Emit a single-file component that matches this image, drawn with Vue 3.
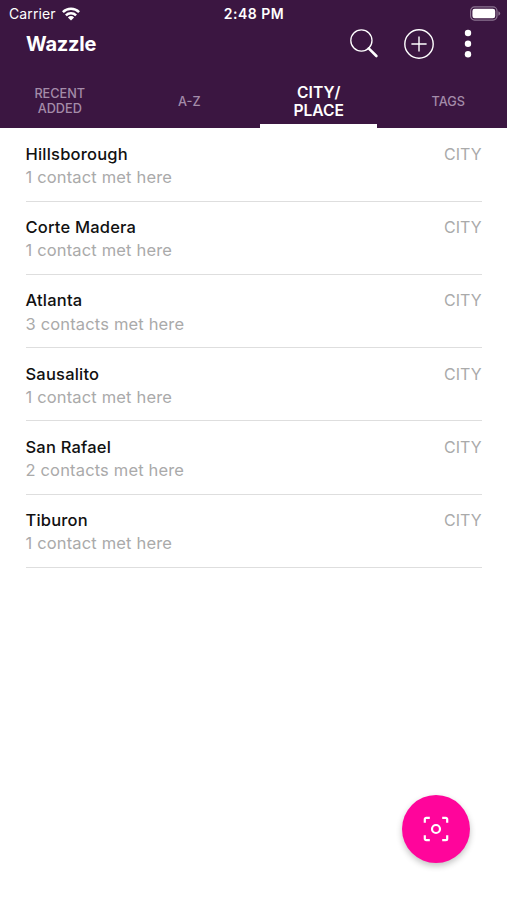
<script setup>
import { ref } from 'vue'

const tabs = [
  { id: 'recent', lines: ['RECENT', 'ADDED'] },
  { id: 'az', lines: ['A-Z'] },
  { id: 'city', lines: ['CITY/', 'PLACE'] },
  { id: 'tags', lines: ['TAGS'] },
]
const active = ref('city')

const places = [
  { name: 'Hillsborough', count: 1 },
  { name: 'Corte Madera', count: 1 },
  { name: 'Atlanta', count: 3 },
  { name: 'Sausalito', count: 1 },
  { name: 'San Rafael', count: 2 },
  { name: 'Tiburon', count: 1 },
]
</script>

<template>
  <div class="screen">
    <header class="header">
      <div class="status">
        <div class="carrier">
          <span>Carrier</span>
          <svg class="wifi" width="18" height="14" viewBox="0 0 18 14">
            <g fill="none" stroke="#fff" stroke-width="2.5">
              <path d="M0.9 5.2a11.5 11.5 0 0 1 16.2 0" />
              <path d="M3.9 8.3a7.2 7.2 0 0 1 10.2 0" />
            </g>
            <path d="M5.9 10.4a4.4 4.4 0 0 1 6.2 0L9 13.6z" fill="#fff" />
          </svg>
        </div>
        <span class="time">2:48 PM</span>
        <div class="power">
          <svg width="31" height="15" viewBox="0 0 31 15">
            <rect x="0.6" y="0.9" width="26.4" height="13.2" rx="4" fill="none" stroke="#8c7491" stroke-width="1.2" />
            <rect x="2.4" y="2.7" width="22.8" height="9.6" rx="2.3" fill="#fff" />
            <path d="M28.4 5.2q1.8.7 1.8 2.3t-1.8 2.3z" fill="#8c7491" />
          </svg>
        </div>
      </div>
      <div class="toolbar">
        <h1 class="title">Wazzle</h1>
        <div class="actions">
          <svg width="30" height="30" viewBox="0 0 30 30" fill="none" stroke="#fff">
            <circle cx="12.4" cy="11.5" r="10.6" stroke-width="1.3" />
            <path d="M19.7 19.3L27.4 27" stroke-width="2.6" stroke-linecap="round" />
          </svg>
          <svg width="32" height="32" viewBox="0 0 32 32" fill="none" stroke="#fff" stroke-width="1.4">
            <circle cx="16" cy="16" r="14.2" />
            <path d="M16 8.4v15.2M8.4 16h15.2" />
          </svg>
          <svg class="more" width="8" height="30" viewBox="0 0 8 30" fill="#fff">
            <circle cx="4" cy="4" r="3.2" />
            <circle cx="4" cy="14.7" r="3.2" />
            <circle cx="4" cy="25.3" r="3.2" />
          </svg>
        </div>
      </div>
      <nav class="tabs">
        <button
          v-for="tab in tabs"
          :key="tab.id"
          class="tab"
          :class="{ active: tab.id === active }"
          @click="active = tab.id"
        >
          <span v-for="line in tab.lines" :key="line">{{ line }}</span>
        </button>
      </nav>
    </header>

    <main class="list">
      <article v-for="place in places" :key="place.name" class="row">
        <div>
          <div class="name">{{ place.name }}</div>
          <div class="met">{{ place.count }} {{ place.count === 1 ? 'contact' : 'contacts' }} met here</div>
        </div>
        <span class="kind">CITY</span>
      </article>
    </main>

    <button class="scan" aria-label="Scan">
      <svg width="26" height="26" viewBox="0 0 26 26" fill="none" stroke="#fff" stroke-width="2.2">
        <path d="M1.8 6.8V3.2a1.4 1.4 0 0 1 1.4-1.4h3.6M19.2 1.8h3.6a1.4 1.4 0 0 1 1.4 1.4v3.6M24.2 19.2v3.6a1.4 1.4 0 0 1-1.4 1.4h-3.6M6.8 24.2H3.2a1.4 1.4 0 0 1-1.4-1.4v-3.6" />
        <circle cx="13" cy="13" r="4" />
      </svg>
    </button>
  </div>
</template>

<style>
body {
  margin: 0;
  background: #fff;
}
</style>

<style scoped>
.screen {
  position: relative;
  height: 900px;
  overflow: hidden;
  background: #fff;
  font-family: Inter, "Liberation Sans", sans-serif;
}
.header {
  height: 127.6px;
  background: #3b1641;
  color: #fff;
}
.status {
  display: grid;
  grid-template-columns: 1fr auto 1fr;
  align-items: center;
  height: 27px;
  padding: 0 6px 0 9px;
  font-size: 14px;
}
.carrier {
  display: flex;
  align-items: center;
  gap: 6px;
  letter-spacing: 0.1px;
}
.wifi {
  display: block;
}
.time {
  margin-right: 2px;
  font-weight: 600;
  letter-spacing: 0.5px;
}
.power {
  display: flex;
  justify-content: flex-end;
}
.toolbar {
  display: flex;
  justify-content: space-between;
  align-items: center;
  height: 34px;
  padding: 0 35px 0 26px;
}
.title {
  margin: 0;
  font-size: 20px;
  font-weight: 700;
  line-height: 34px;
  letter-spacing: -0.2px;
}
.actions {
  display: flex;
  align-items: center;
  gap: 24px;
}
.more {
  margin-left: 5px;
}
.tabs {
  display: grid;
  grid-template-columns: repeat(4, 117.5px);
  justify-content: center;
  column-gap: 12px;
  height: 66.6px;
}
.tab {
  display: flex;
  flex-direction: column;
  align-items: center;
  justify-content: center;
  padding: 14px 0 0 1px;
  border: 0;
  background: none;
  color: #a48ca9;
  font: 500 12.7px/15px Inter, "Liberation Sans", sans-serif;
}
.tab.active {
  color: #fff;
  font-size: 15.6px;
  font-weight: 600;
  line-height: 18.5px;
  padding-top: 20px;
  border-bottom: 4px solid #fff;
}
.list {
  padding: 0.8px 25.5px 0;
}
.row {
  display: flex;
  justify-content: space-between;
  box-sizing: border-box;
  height: 73.25px;
  padding-top: 14.4px;
  border-bottom: 1px solid #dedede;
  line-height: 23.4px;
}
.name {
  color: #111;
  font-size: 16.5px;
  font-weight: 500;
  letter-spacing: 0.2px;
}
.met,
.kind {
  color: #aaa;
  font-size: 16px;
}
.met {
  font-size: 16.5px;
  letter-spacing: 0.16px;
}
.scan {
  position: absolute;
  left: 402px;
  top: 795px;
  display: flex;
  align-items: center;
  justify-content: center;
  width: 68px;
  height: 68px;
  padding: 0;
  border: 0;
  border-radius: 50%;
  background: #ff059b;
  box-shadow: 0 3px 6px rgba(0, 0, 0, 0.24);
}
</style>
